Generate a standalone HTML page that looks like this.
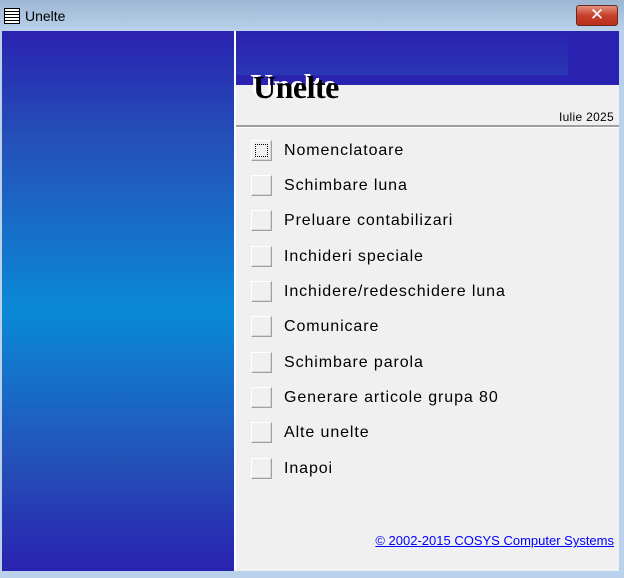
<!DOCTYPE html><html><head><style>
body{margin:0;width:624px;height:578px;position:relative;overflow:hidden;background:#f0f0f0;font-family:"Liberation Sans",sans-serif}
.tb{position:absolute;left:0;top:0;width:624px;height:31px;background:linear-gradient(#9db6d2,#b9d1ea)}
.fr{position:absolute;background:#b9d1ea}
.left{position:absolute;left:2px;top:31px;width:232px;height:540px;background:linear-gradient(#2a22b0 0%,#2450b8 20%,#0a8ad6 52%,#2450b8 80%,#2a22b0 100%)}
.div{position:absolute;left:234px;top:31px;width:2px;height:540px;background:#fff}
.hdr{position:absolute;left:236px;top:31px;width:383px;height:54px;background:#2a22b0}
.hin{position:absolute;left:236px;top:31px;width:332px;height:44px;background:linear-gradient(#2a22b0,#2a36b4)}
.t{position:absolute;left:253px;top:69px;font:bold 32px "Liberation Serif",serif;color:#000;text-shadow:-3px -2px 0 #fff;letter-spacing:-0.5px}
.b{position:absolute;left:251px;width:21px;height:21px;box-sizing:border-box;border:1px solid;border-color:#fff #a0a0a0 #a0a0a0 #fff;box-shadow:inset -1px -1px 0 #d8d8d8;background:#f0f0f0}
.l{position:absolute;left:284px;font-size:16px;letter-spacing:0.9px;color:#000}
</style></head><body>
<div class="tb"></div>
<div style="position:absolute;left:4px;top:8px;width:16px;height:16px;border:1px solid #000;box-sizing:border-box;background:repeating-linear-gradient(#fff 0 2px,#000 2px 3px)"></div>
<div style="position:absolute;left:25px;top:8px;font-size:14px">Unelte</div>
<div style="position:absolute;left:576px;top:5px;width:42px;height:21px;border-radius:3px;border:1px solid #6a2a20;box-sizing:border-box;background:linear-gradient(#e09080,#c8402a 50%,#b8301c);color:#fff;font:bold 17px/19px 'DejaVu Sans',sans-serif;text-align:center">✕</div>
<div class="fr" style="left:619px;top:31px;width:5px;height:547px"></div>
<div class="fr" style="left:0;top:571px;width:624px;height:7px"></div>
<div style="position:absolute;left:0;top:31px;width:2px;height:547px;background:#b9d1ea"></div>
<div class="left"></div><div class="div"></div>
<div class="hdr"></div><div class="hin"></div>
<div class="t">Unelte</div>
<div style="position:absolute;right:10px;top:110px;font-size:12px;letter-spacing:0.3px">Iulie 2025</div>
<div style="position:absolute;left:236px;top:125px;width:383px;height:2px;background:#a0a0a0;border-bottom:1px solid #fff"></div>
<div class="b" style="top:140px"><div style="position:absolute;left:3px;top:3px;width:13px;height:13px;border:1px dotted #000;box-sizing:border-box"></div></div><div class="l" style="top:142px">Nomenclatoare</div>
<div class="b" style="top:175px"></div><div class="l" style="top:177px">Schimbare luna</div>
<div class="b" style="top:210px"></div><div class="l" style="top:212px">Preluare contabilizari</div>
<div class="b" style="top:246px"></div><div class="l" style="top:248px">Inchideri speciale</div>
<div class="b" style="top:281px"></div><div class="l" style="top:283px">Inchidere/redeschidere luna</div>
<div class="b" style="top:316px"></div><div class="l" style="top:318px">Comunicare</div>
<div class="b" style="top:352px"></div><div class="l" style="top:354px">Schimbare parola</div>
<div class="b" style="top:387px"></div><div class="l" style="top:389px">Generare articole grupa 80</div>
<div class="b" style="top:422px"></div><div class="l" style="top:424px">Alte unelte</div>
<div class="b" style="top:458px"></div><div class="l" style="top:460px">Inapoi</div>
<div style="position:absolute;right:10px;top:533px;font-size:13px;color:#0000ff;text-decoration:underline">© 2002-2015 COSYS Computer Systems</div>
</body></html>
